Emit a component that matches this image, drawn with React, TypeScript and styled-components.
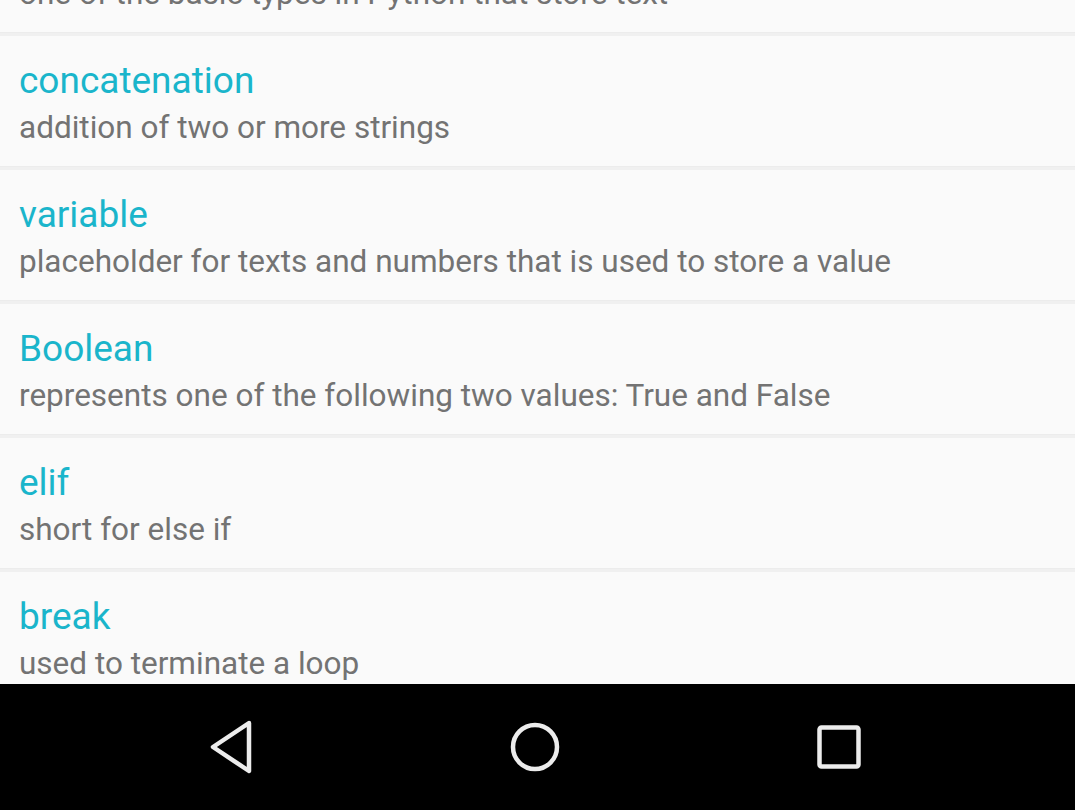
import React from "react";
import styled, { createGlobalStyle } from "styled-components";

const GlobalStyle = createGlobalStyle`
  html, body { margin: 0; padding: 0; background: #fafafa; }
  body { font-family: Roboto, "Noto Sans", sans-serif; }
`;

const Screen = styled.div`
  width: 1075px;
  height: 810px;
  display: flex;
  flex-direction: column;
  overflow: hidden;
  background: #fafafa;
`;

const ListViewport = styled.div`
  height: 684px;
  overflow: hidden;
  flex: none;
`;

const List = styled.ul`
  list-style: none;
  margin: -98px 0 0 0;
  padding: 0;
`;

const Row = styled.li`
  box-sizing: border-box;
  height: 134px;
  padding: 25px 19px 21px;
  background: #fafafa;
  border-bottom: 3px solid #f0f0f0;
  box-shadow: inset 0 -1px 0 #ececec;
`;

const Term = styled.div`
  font-size: 37px;
  line-height: 40px;
  color: #1ab5cb;
  white-space: nowrap;
`;

const Definition = styled.div`
  margin-top: 9px;
  font-size: 31.5px;
  line-height: 36px;
  color: #737373;
  white-space: nowrap;
`;

const NavBar = styled.nav`
  flex: 1;
  background: #000;
  display: grid;
  grid-template-columns: 1fr 1fr 1fr;
  align-items: center;
`;

const NavButton = styled.div<{ $shift: number }>`
  display: flex;
  justify-content: center;
  align-items: center;
  transform: translateX(${(p) => p.$shift}px);
`;

const items = [
  { term: "string", def: "one of the basic types in Python that store text" },
  { term: "concatenation", def: "addition of two or more strings" },
  { term: "variable", def: "placeholder for texts and numbers that is used to store a value" },
  { term: "Boolean", def: "represents one of the following two values: True and False" },
  { term: "elif", def: "short for else if" },
  { term: "break", def: "used to terminate a loop" },
];

export default function App() {
  return (
    <>
      <GlobalStyle />
      <Screen>
        <ListViewport>
          <List>
            {items.map((it) => (
              <Row key={it.term}>
                <Term>{it.term}</Term>
                <Definition>{it.def}</Definition>
              </Row>
            ))}
          </List>
        </ListViewport>
        <NavBar>
          <NavButton $shift={52}>
            <svg width="46" height="54" viewBox="0 0 46 54">
              <path d="M41 3 L5 27 L41 51 Z" fill="none" stroke="#ececec" strokeWidth="4.5" strokeLinejoin="round" />
            </svg>
          </NavButton>
          <NavButton $shift={-2}>
            <svg width="54" height="54" viewBox="0 0 54 54">
              <circle cx="27" cy="27" r="22" fill="none" stroke="#ececec" strokeWidth="4.5" />
            </svg>
          </NavButton>
          <NavButton $shift={-57}>
            <svg width="48" height="48" viewBox="0 0 48 48">
              <rect x="4.5" y="4.5" width="39" height="39" rx="2" fill="none" stroke="#ececec" strokeWidth="4.5" />
            </svg>
          </NavButton>
        </NavBar>
      </Screen>
    </>
  );
}
